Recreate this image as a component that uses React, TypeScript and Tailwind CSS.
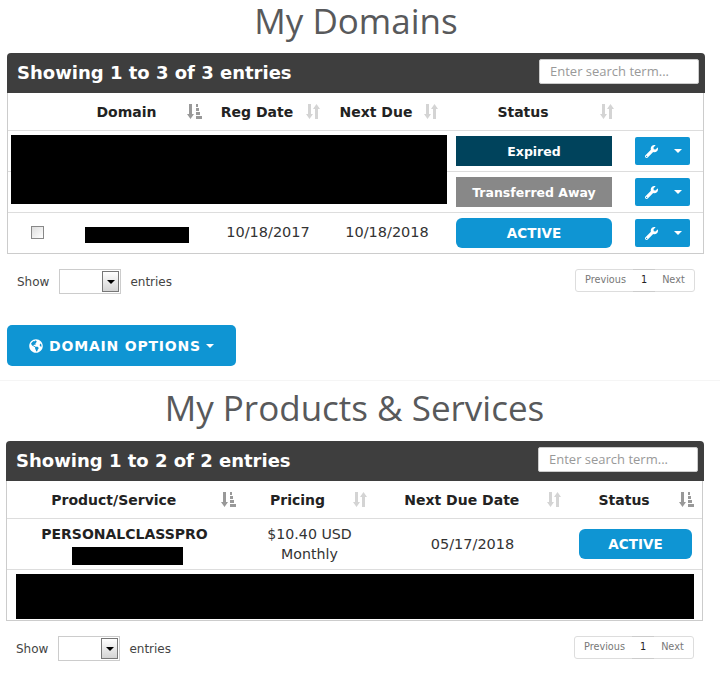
import { FaGlobeAmericas, FaWrench } from 'react-icons/fa';

const BLUE = 'bg-[#0f95d3]';

function SortIcon({ active }: { active?: boolean }) {
  if (active) {
    return (
      <svg width="15" height="15" viewBox="0 0 15 15" className="block fill-[#999]">
        <path d="M2 0h3v10h2l-3.500 5L0 10h2z" />
        <path d="M9 0h2v3H9zM9 4h3v3H9zM9 8h4v3H9zM9 12h6v3H9z" />
      </svg>
    );
  }
  return (
    <svg width="14" height="15" viewBox="0 0 14 15" className="block fill-[#d4d4d4]">
      <path d="M2 0h3v10h2l-3.500 5L0 10h2z" />
      <path d="M9 15h3V5h2L10.500 0 7 5h2z" />
    </svg>
  );
}

function HeadCell({ label, active, className, iconRight }: { label: string; active?: boolean; className: string; iconRight: string }) {
  return (
    <div className={`relative flex items-center justify-center pt-[2px] text-[14px] font-bold text-[#222] ${className}`}>
      {label}
      <span className={`absolute top-[11px] ${iconRight}`}>
        <SortIcon active={active} />
      </span>
    </div>
  );
}

function ActionButton() {
  return (
    <div className={`flex h-[28px] w-[55px] items-center rounded-[2px] ${BLUE} pl-[10px] text-white`}>
      <FaWrench size={13} />
      <span className="ml-[16px] h-0 w-0 border-x-[4px] border-t-[4px] border-x-transparent border-t-white" />
    </div>
  );
}

function Toolbar({ text }: { text: string }) {
  return (
    <div className="flex h-[40px] items-center justify-between rounded-t-[4px] bg-[#3e3e3e] pl-[10px] pr-[6px]">
      <span className="pb-[2px] text-[18px] font-bold text-white">{text}</span>
      <input
        placeholder="Enter search term..."
        className="mb-[3px] h-[25px] w-[160px] rounded-[2px] border border-[#ccc] bg-white px-[10px] pb-[2px] font-['Open_Sans',sans-serif] text-[13px] placeholder:text-[#999]"
      />
    </div>
  );
}

function Footer() {
  return (
    <div className="flex items-start justify-between pl-[10px] pr-[10px] pt-[15px]">
      <div className="flex items-center text-[12px] text-[#444]">
        <span>Show</span>
        <div className="ml-[10px] flex h-[25px] w-[62px] justify-end border border-[#ccc] bg-white p-px">
          <div className="flex h-[21px] w-[17px] items-center justify-center border border-[#777] bg-gradient-to-b from-white to-[#d4d4d4]">
            <span className="h-0 w-0 border-x-[4px] border-t-[4px] border-x-transparent border-t-black" />
          </div>
        </div>
        <span className="ml-[9px]">entries</span>
      </div>
      <div className="flex h-[23px] w-[120px] items-center rounded-[3px] border border-[#ddd] text-[9.700px] text-[#777]">
        <span className="pl-[9px] pr-[7px]">Previous</span>
        <span className="flex h-[23px] items-center border-y border-[#ccc] px-[8px] text-[#222]">1</span>
        <span className="pl-[7px]">Next</span>
      </div>
    </div>
  );
}

export default function App() {
  return (
    <div className="h-[673px] w-[720px] overflow-hidden bg-white font-['DejaVu_Sans',sans-serif] text-[#333]">
      {/* domains */}
      <h1 className="h-[53px] pr-[8px] text-center font-['Open_Sans',sans-serif] text-[35px] leading-[42px] text-[#58595b]">My Domains</h1>
      <div className="ml-[7px] w-[698px]">
        <Toolbar text="Showing 1 to 3 of 3 entries" />
        <div className="relative mr-px border-x border-b border-[#ccc]">
          <div className="flex h-[38px] border-b border-[#ddd]">
            <div className="w-[56px]" />
            <HeadCell label="Domain" active className="w-[150px] pr-[25px]" iconRight="right-[12px]" />
            <HeadCell label="Reg Date" className="w-[118px] pr-[32px]" iconRight="right-[12px]" />
            <HeadCell label="Next Due" className="w-[118px] pr-[30px]" iconRight="right-[12px]" />
            <HeadCell label="Status" className="w-[172px] pr-[26px]" iconRight="right-[8px]" />
          </div>
          <div className="flex h-[41px] items-center justify-end border-b border-[#ddd]">
            <div className="mr-[23px] flex h-[30px] w-[156px] items-center justify-center bg-[#00435c] pt-[2px] text-[12.500px] font-bold text-white">Expired</div>
            <div className="mr-[13px]"><ActionButton /></div>
          </div>
          <div className="flex h-[41px] items-center justify-end border-b border-[#ddd]">
            <div className="mr-[23px] flex h-[30px] w-[156px] items-center justify-center bg-[#888] pt-[2px] text-[12.500px] font-bold text-white">Transferred Away</div>
            <div className="mr-[13px]"><ActionButton /></div>
          </div>
          <div className="flex h-[40px] items-center text-[14.500px]">
            <div className="flex w-[56px] justify-center pb-px pl-[2px]">
              <div className="h-[13px] w-[13px] border border-[#888] bg-gradient-to-br from-[#ddd] to-white" />
            </div>
            <div className="ml-[21px] mt-[4px] h-[16px] w-[104px] bg-black" />
            <div className="w-[156px] pl-[2px] text-center">10/18/2017</div>
            <div className="w-[84px] whitespace-nowrap text-center">10/18/2018</div>
            <div className={`ml-[27px] flex h-[30px] w-[156px] items-center justify-center rounded-[6px] ${BLUE} pt-[1px] text-[13.500px] font-bold text-white`}>ACTIVE</div>
            <div className="ml-[23px]"><ActionButton /></div>
          </div>
          {/* redacted rows */}
          <div className="absolute left-[3px] top-[42px] h-[69px] w-[436px] bg-black" />
        </div>
        <Footer />
      </div>

      <div className="ml-[7px] mt-[31px] flex h-[41px] w-[229px] items-center justify-center rounded-[5px] bg-[#0f95d3] text-[14px] font-bold tracking-[0.800px] text-white">
        <FaGlobeAmericas size={14} className="mr-[6px]" />
        <span className="pt-[1px]">DOMAIN OPTIONS</span>
        <span className="ml-[5px] h-0 w-0 border-x-[4px] border-t-[4px] border-x-transparent border-t-white" />
      </div>

      <div className="mt-[14px] h-px bg-[#f5f5f5]" />

      {/* products */}
      <h1 className="h-[60px] pr-[11px] pt-[6px] text-center font-['Open_Sans',sans-serif] text-[35px] leading-[42px] text-[#58595b]">My Products &amp; Services</h1>
      <div className="ml-[6px] w-[698px]">
        <Toolbar text="Showing 1 to 2 of 2 entries" />
        <div className="mr-px border-x border-b border-[#ccc]">
          <div className="flex h-[38px] border-b border-[#ddd]">
            <HeadCell label="Product/Service" active className="w-[235px] pr-[21px]" iconRight="right-[6px]" />
            <HeadCell label="Pricing" className="w-[133px] pr-[21px]" iconRight="right-[7px]" />
            <HeadCell label="Next Due Date" className="w-[193px] pr-[18px]" iconRight="right-[6px]" />
            <HeadCell label="Status" active className="w-[135px] pr-[21px]" iconRight="right-[8px]" />
          </div>
          <div className="flex h-[51px] items-center border-b border-[#ddd] text-[14.500px]">
            <div className="flex w-[235px] flex-col items-center">
              <span className="text-[14px] font-bold leading-[20px] text-[#222]">PERSONALCLASSPRO</span>
              <div className="ml-[5px] mt-[3px] h-[18px] w-[111px] bg-black" />
            </div>
            <div className="w-[133px] pb-[1px] pl-[2px] text-center text-[14.200px] leading-[20px]">$10.40 USD<br />Monthly</div>
            <div className="w-[204px] pr-[9px] pt-[2px] text-center">05/17/2018</div>
            <div className={`flex h-[30px] w-[113px] items-center justify-center rounded-[6px] ${BLUE} pt-[1px] text-[13.500px] font-bold text-white`}>ACTIVE</div>
          </div>
          <div className="h-[50px] px-[9px] pb-px pt-[4px]">
            <div className="h-[45px] w-[678px] bg-black" />
          </div>
        </div>
        <Footer />
      </div>
    </div>
  );
}
